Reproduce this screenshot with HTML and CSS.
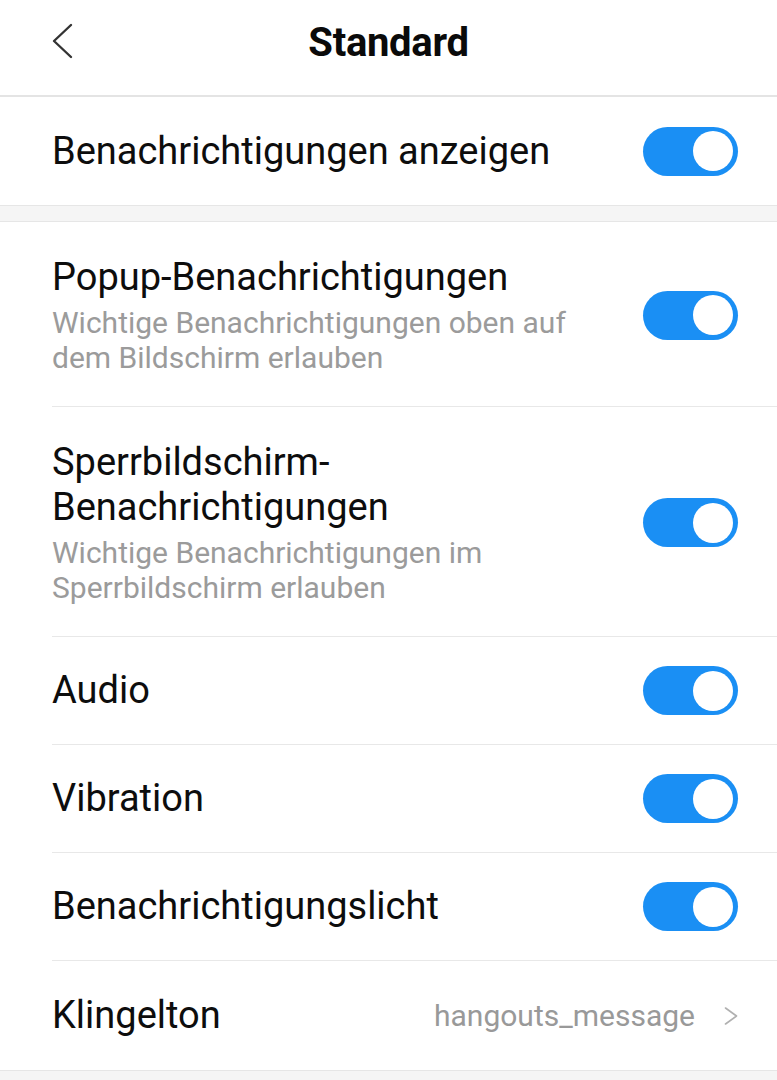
FILE: index.html
```html
<!DOCTYPE html>
<html lang="de">
<head>
<meta charset="utf-8">
<title>Standard</title>
<link rel="stylesheet" href="styles.css">
</head>
<body>
<div class="screen">
  <header class="topbar">
    <button class="back" aria-label="Zurück">
      <svg width="24" height="36" viewBox="0 0 24 36"><polyline points="20,2 3,18 20,34" fill="none" stroke="#333" stroke-width="2.4" stroke-linecap="round" stroke-linejoin="round"/></svg>
    </button>
    <h1 class="title">Standard</h1>
  </header>

  <section class="group">
    <div class="row single">
      <div class="text"><div class="label">Benachrichtigungen anzeigen</div></div>
      <span class="toggle"><span class="knob"></span></span>
    </div>
  </section>

  <div class="band"></div>

  <section class="group">
    <div class="row multi">
      <div class="text">
        <div class="label">Popup-Benachrichtigungen</div>
        <div class="sub">Wichtige Benachrichtigungen oben auf<br>dem Bildschirm erlauben</div>
      </div>
      <span class="toggle"><span class="knob"></span></span>
    </div>
    <div class="row multi">
      <div class="text">
        <div class="label">Sperrbildschirm-<br>Benachrichtigungen</div>
        <div class="sub">Wichtige Benachrichtigungen im<br>Sperrbildschirm erlauben</div>
      </div>
      <span class="toggle"><span class="knob"></span></span>
    </div>
    <div class="row single">
      <div class="text"><div class="label">Audio</div></div>
      <span class="toggle"><span class="knob"></span></span>
    </div>
    <div class="row single">
      <div class="text"><div class="label">Vibration</div></div>
      <span class="toggle"><span class="knob"></span></span>
    </div>
    <div class="row single">
      <div class="text"><div class="label">Benachrichtigungslicht</div></div>
      <span class="toggle"><span class="knob"></span></span>
    </div>
    <div class="row single last">
      <div class="text"><div class="label">Klingelton</div></div>
      <div class="value">
        <span>hangouts_message</span>
        <svg width="14" height="20" viewBox="0 0 14 20"><polyline points="1.5,2 12.5,10 1.5,18" fill="none" stroke="#b0b0b0" stroke-width="1.6" stroke-linecap="round" stroke-linejoin="round"/></svg>
      </div>
    </div>
  </section>
  <div class="band bottom"></div>
</div>
</body>
</html>
```
FILE: styles.css
```css
html, body {
  margin: 0;
  padding: 0;
  background: #ffffff;
}
body {
  font-family: Roboto, "Noto Sans", "Liberation Sans", sans-serif;
  color: #111;
}
.screen {
  width: 777px;
  min-height: 1080px;
  background: #fff;
  overflow: hidden;
}
.topbar {
  height: 95px;
  display: flex;
  align-items: center;
  justify-content: center;
  position: relative;
  border-bottom: 2px solid #e4e4e4;
}
.back {
  position: absolute;
  left: 51px;
  top: 23px;
  border: 0;
  background: none;
  padding: 0;
  width: 24px;
  height: 36px;
}
.back svg { display: block; }
.title {
  margin: 0;
  font-size: 40px;
  font-weight: 700;
  color: #0a0a0a;
  letter-spacing: -0.3px;
  transform: translateY(-5px);
}
.group {
  display: flex;
  flex-direction: column;
}
.row {
  margin-left: 52px;
  padding-right: 39px;
  display: flex;
  align-items: center;
  justify-content: space-between;
  border-bottom: 1px solid #e8e8e8;
}
.row.single {
  height: 108px;
  box-sizing: border-box;
}
.row.multi {
  padding-top: 33px;
  padding-bottom: 31px;
}
.row.last { border-bottom: 0; height: 109px; }
.group .row:first-child:last-child { border-bottom: 0; }
.label {
  font-size: 38px;
  line-height: 45px;
  color: #0d0d0d;
}
.sub {
  margin-top: 5px;
  font-size: 30px;
  line-height: 35px;
  color: #9b9b9b;
}
.toggle {
  flex: none;
  width: 95px;
  height: 49px;
  border-radius: 25px;
  background: #1a8ff4;
  display: flex;
  align-items: center;
  justify-content: flex-end;
  padding-right: 5px;
  box-sizing: border-box;
}
.knob {
  width: 40px;
  height: 40px;
  border-radius: 50%;
  background: #fff;
}
.value {
  display: flex;
  align-items: center;
  gap: 29px;
  font-size: 30px;
  color: #999;
}
.value svg { display: block; }
.band {
  height: 15px;
  background: #f5f5f5;
  border-top: 1px solid #e6e6e6;
  border-bottom: 1px solid #e6e6e6;
}
.band.bottom {
  border-bottom: 0;
  height: 20px;
}
```
